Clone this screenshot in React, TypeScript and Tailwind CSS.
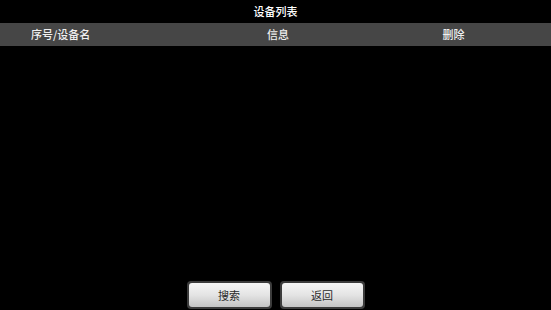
import React from 'react';

const font = { fontFamily: '"Noto Sans CJK SC", "Noto Sans", sans-serif' };

function Btn({ label }: { label: string }) {
  return (
    <button className="h-[28px] w-[85px] rounded-[4px] bg-[#3c3c3c] p-[2px]">
      <span className="flex h-full w-full items-center justify-center rounded-[3px] bg-gradient-to-b from-[#f6f6f6] via-[#e4e4e4] to-[#c4c4c4] text-[11px] leading-none text-[#2a2a2a]">
        {label}
      </span>
    </button>
  );
}

export default function App() {
  return (
    <div className="flex h-[310px] w-full flex-col bg-black" style={font}>
      <div className="flex h-[23px] items-center justify-center text-[11px] font-medium leading-none text-white">
        设备列表
      </div>
      <div className="grid h-[23px] grid-cols-[200px_156px_1fr] items-center bg-[#464646] text-[11px] font-medium leading-none text-[#f0f0f0]">
        <span className="pl-[31px]">序号/设备名</span>
        <span className="text-center">信息</span>
        <span className="text-center">删除</span>
      </div>
      <div className="flex-1" />
      <div className="flex justify-center gap-[8px] pb-[1px]">
        <Btn label="搜索" />
        <Btn label="返回" />
      </div>
    </div>
  );
}
